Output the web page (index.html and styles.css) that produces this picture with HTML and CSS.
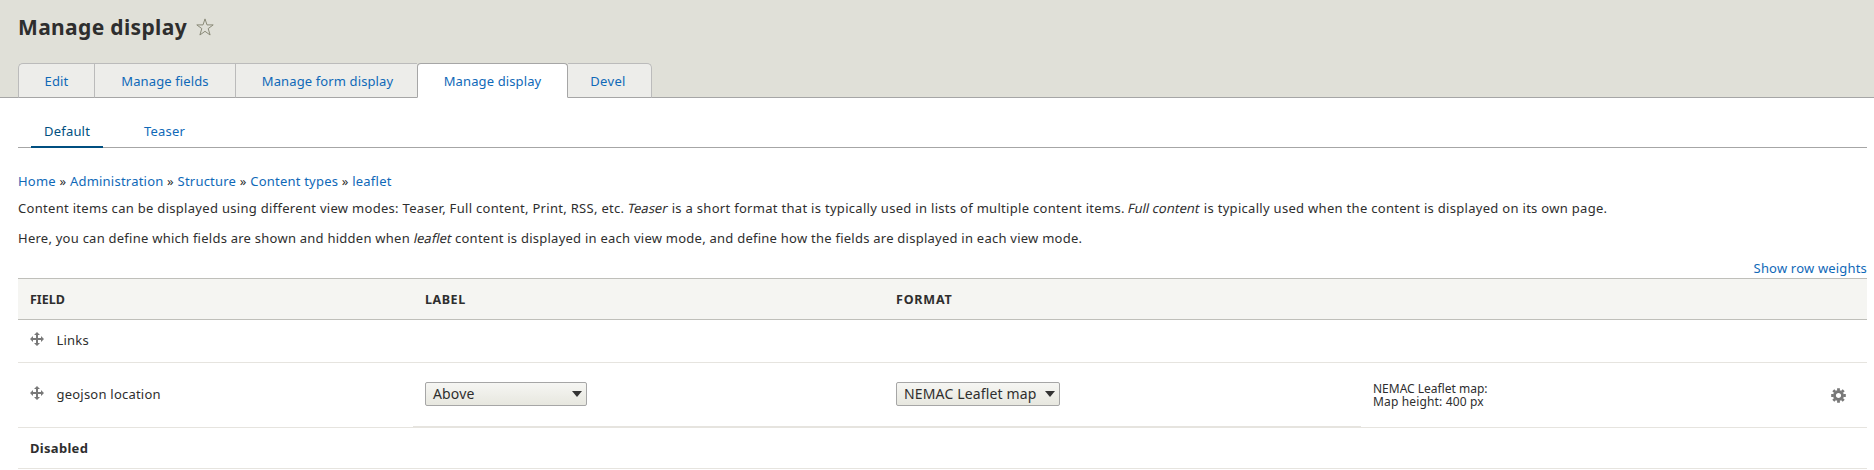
FILE: index.html
```html
<!DOCTYPE html>
<html lang="en">
<head>
<meta charset="utf-8">
<title>Manage display</title>
<link rel="stylesheet" href="styles.css">
</head>
<body>
<svg class="defs" width="0" height="0">
  <symbol id="move" viewBox="0 0 14 14"><path d="M7 0l3 3H8v3h3V4l3 3-3 3V8H8v3h2l-3 3-3-3h2V8H3v2L0 7l3-3v2h3V3H4z"/></symbol>
</svg>
<header class="header">
  <div class="title-row">
    <h1 class="title">Manage display</h1>
    <svg class="star" viewBox="0 0 18 18"><path d="M9 .9l2 6h6.200l-5 3.700 1.900 6.400L9 13.300 3.900 17l1.900-6.400L.8 6.900H7z"/></svg>
  </div>
  <nav class="tabs">
    <a class="tab tab-edit">Edit</a>
    <a class="tab tab-fields">Manage fields</a>
    <a class="tab tab-form">Manage form display</a>
    <a class="tab tab-display active">Manage display</a>
    <a class="tab tab-devel">Devel</a>
  </nav>
</header>
<main class="content">
  <nav class="modes">
    <a class="mode current">Default</a>
    <a class="mode">Teaser</a>
  </nav>
  <nav class="breadcrumb"><a>Home</a> » <a>Administration</a> » <a>Structure</a> » <a>Content types</a> » <a>leaflet</a></nav>
  <p class="help help-modes">Content items can be displayed using different view modes: Teaser, Full content, Print, RSS, etc. <em>Teaser</em> is a short format that is typically used in lists of multiple content items. <em>Full content</em> is typically used when the content is displayed on its own page.</p>
  <p class="help help-fields">Here, you can define which fields are shown and hidden when <em>leaflet</em> content is displayed in each view mode, and define how the fields are displayed in each view mode.</p>
  <div class="weights"><a>Show row weights</a></div>
  <div class="table">
    <div class="row head"><div class="cell">FIELD</div><div class="cell head-label">LABEL</div><div class="cell head-format">FORMAT</div><div class="cell"></div></div>
    <div class="row links"><div class="cell field"><svg class="move"><use href="#move"/></svg><span>Links</span></div></div>
    <div class="row geo">
      <div class="cell field"><svg class="move"><use href="#move"/></svg><span>geojson location</span></div>
      <div class="cell ruled"><div class="select select-label"><span>Above</span><i class="caret"></i></div></div>
      <div class="cell ruled"><div class="select select-format"><span>NEMAC Leaflet map</span><i class="caret"></i></div></div>
      <div class="cell last">
        <div class="summary"><div>NEMAC Leaflet map:</div><div class="summary-height">Map height: 400 px</div></div>
        <svg class="gear" viewBox="-7.500 -7.500 15 15"><circle r="4"/><path d="M0-4.800V-7.300M0 4.800V7.300M-4.800 0H-7.300M4.800 0H7.300M-3.400-3.400L-5.200-5.200M3.400 3.400L5.200 5.200M-3.400 3.400L-5.200 5.200M3.400-3.400L5.200-5.200"/></svg>
      </div>
    </div>
    <div class="row disabled"><div class="cell">Disabled</div></div>
  </div>
</main>
</body>
</html>
```
FILE: styles.css
```css
* { box-sizing: border-box; }
body { margin: 0; background: #fff; color: #2e2e2e; font: 13px/20px "Noto Sans", sans-serif; }
a { color: #0f69b8; text-decoration: none; white-space: nowrap; }
em { display: inline-block; font-style: normal; transform: skewX(-12deg); letter-spacing: 0; }
.defs { display: block; height: 0; }
.header { height: 98px; background: #e0e0d8; border-bottom: 1px solid #a6a6a6; padding: 12px 18px 0; }
.title-row { display: flex; height: 51px; }
.title { margin: 0; width: 178px; font-size: 21px; line-height: 30px; font-weight: 700; letter-spacing: .35px; white-space: nowrap; }
.star { width: 18px; height: 18px; margin-top: 6px; fill: none; stroke: #8a8a78; stroke-width: 1; }
.tabs { display: flex; height: 35px; letter-spacing: .12px; }
.tab { display: flex; align-items: center; justify-content: center; height: 35px; background: #ededea; border: 1px solid #bbb; border-bottom-color: #a6a6a6; border-right: 0; }
.tab-edit { width: 76px; border-radius: 5px 0 0; }
.tab-fields { width: 141px; }
.tab-form { width: 182px; padding-left: 2px; }
.tab-display { width: 151px; }
.tab-devel { width: 84px; padding-right: 3px; border-left: 0; border-right: 1px solid #bbb; border-radius: 0 5px 0 0; letter-spacing: .3px; }
.tab.active { background: #fff; border: 1px solid #a6a6a6; border-bottom-color: #fff; border-radius: 4px 4px 0 0; }
.content { padding: 14px 7px 0 18px; }
.modes { display: flex; gap: 28px; height: 36px; padding-left: 13px; border-bottom: 1px solid #a6a6a6; letter-spacing: .2px; }
.mode { height: 36px; padding: 9px 13px 0; border-bottom: 2px solid transparent; }
.mode.current { color: #004f80; border-color: #004f80; width: 72px; }
.breadcrumb { margin-top: 23px; white-space: nowrap; letter-spacing: .22px; }
.help { margin: 7px 0 0; white-space: nowrap; }
.help-modes { letter-spacing: .3px; }
.help-fields { margin-top: 10px; letter-spacing: .245px; }
.weights { margin-top: 10px; text-align: right; letter-spacing: .18px; }
.table { border-top: 1px solid #bfbfba; }
.row { display: grid; grid-template-columns: 395px 471px 477px 1fr; border-bottom: 1px solid #e6e4df; }
.cell { display: flex; align-items: center; padding-left: 12px; }
.head { height: 41px; padding-top: 1px; background: #f5f5f2; border-color: #bfbfba; font-weight: 700; font-size: 12.500px; }
.head-label { letter-spacing: .55px; }
.head-format { letter-spacing: .8px; }
.links { height: 43px; }
.field { padding-bottom: 2px; letter-spacing: .22px; }
.geo { height: 65px; }
.disabled { height: 41px; font-weight: 700; letter-spacing: .3px; }
.move { width: 14px; height: 14px; margin: -3px 12.500px 0 0; fill: #787878; }
.ruled { padding-bottom: 2px; border-bottom: 1px solid #e6e4df; }
.select { display: flex; align-items: center; justify-content: space-between; height: 24px; padding: 0 4px 0 7px; border: 1px solid #a6a6a6; border-radius: 2px; background: linear-gradient(#f6f6f3, #e7e7df); font-size: 14px; letter-spacing: .15px; white-space: nowrap; }
.select-label { width: 162px; }
.select-format { width: 164px; }
.caret { margin-top: 1px; border: 5px solid transparent; border-top: 6px solid #333; border-bottom: 0; }
.last { justify-content: space-between; padding-right: 21px; }
.summary { font-size: 12px; line-height: 13px; }
.summary-height { letter-spacing: .15px; }
.gear { width: 15px; height: 15px; fill: none; stroke: #787878; stroke-width: 2.800; }
```
